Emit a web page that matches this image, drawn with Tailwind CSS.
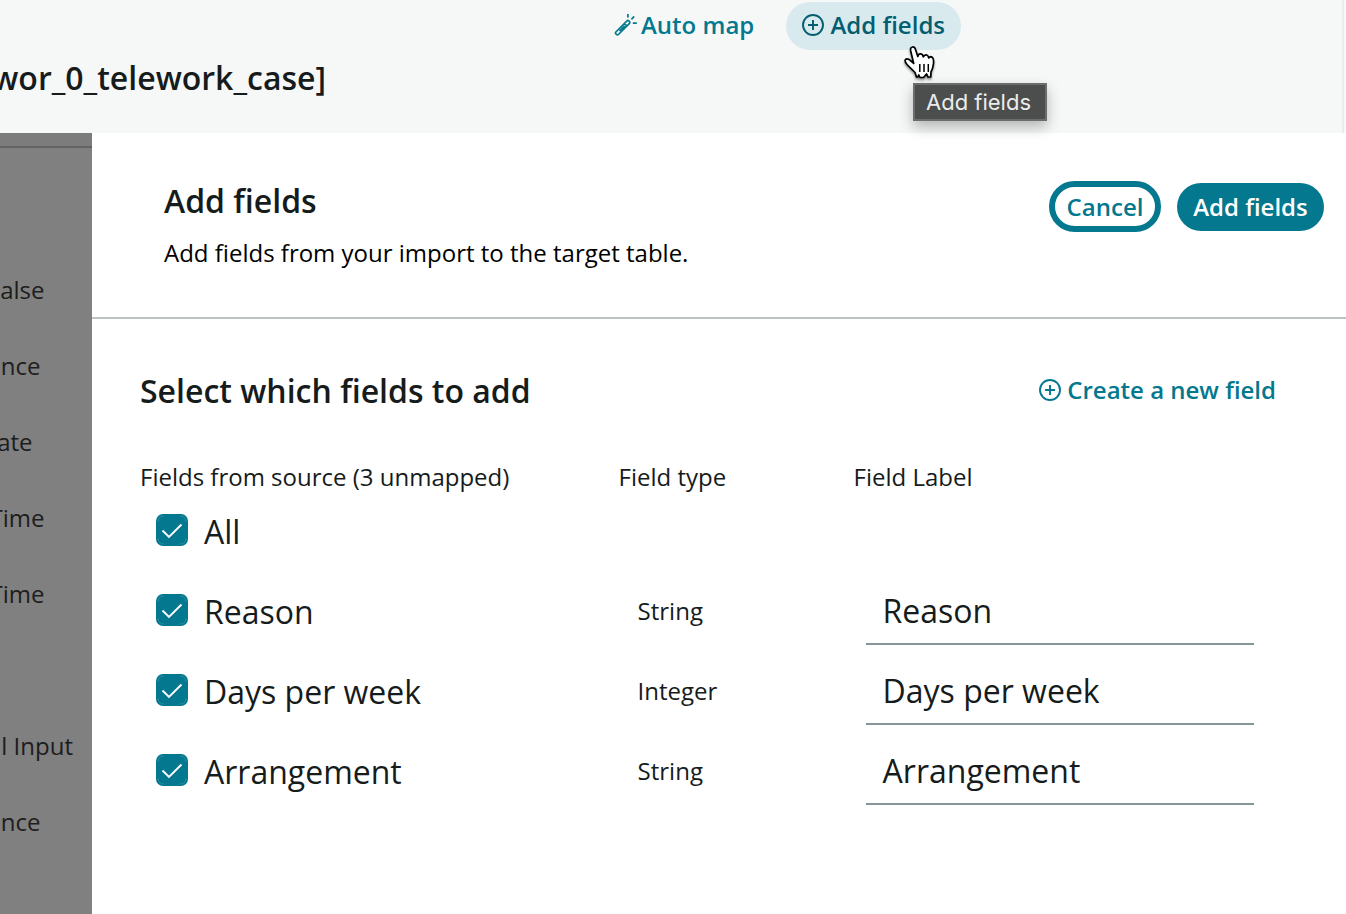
<!DOCTYPE html>
<html lang="en">
<head>
<meta charset="utf-8">
<title>Add fields</title>
<script src="https://cdn.jsdelivr.net/npm/@tailwindcss/browser@4"></script>
</head>
<body class="relative flex h-[914px] w-[1346px] flex-col overflow-hidden bg-white font-['Open_Sans',sans-serif] text-2xl text-[#161b1b]">
<svg class="hidden">
  <symbol id="plus" viewBox="0 0 22 22"><circle cx="11" cy="11" r="10" fill="none" stroke="currentColor" stroke-width="1.9"/><path d="M11 6v10M6 11h10" stroke="currentColor" stroke-width="1.9"/></symbol>
  <symbol id="check" viewBox="0 0 32 32"><path d="M2 8Q2 2 8 2M24 2Q30 2 30 8M30 24Q30 30 24 30M8 30Q2 30 2 24" fill="none" stroke="#4b9cac" stroke-width=".6"/><path d="M6.500 16.500l6.500 6.500L25.500 10.500" fill="none" stroke="#fff" stroke-width="1.9"/></symbol>
</svg>
<header class="flex h-[133px] shrink-0 flex-col bg-[#f6f8f8]">
  <div class="mr-[2px] h-full border-r-2 border-[#e9ecec]">
    <div class="ml-[614px] flex h-[50px] items-start pt-[2px] font-semibold text-[#03788e]">
      <div class="flex h-[46px] w-[140px] items-center">
        <svg class="mr-1 h-[23px] w-[23px] shrink-0" viewBox="0 0 23 23" fill="none" stroke="currentColor" stroke-width="1.700"><path d="M1.900 18L13 6.900Q13.900 6 14.800 6.900L15.500 7.600Q16.400 8.500 15.500 9.400L4.400 20.500Q3.500 21.400 2.600 20.500L1.900 19.800Q1 18.900 1.900 18ZM10.500 9.600l2.400 2.400M5.500 17l5.200-5.200M13.900 0v3.600M20.200 2.400l-2.800 2.900M22.800 9.200h-4"/></svg>
        <span class="whitespace-nowrap">Auto map</span>
      </div>
      <div class="ml-8 h-12 w-[175px] rounded-full bg-[#d9eaef] pl-4 text-[#035e6f]">
        <div class="flex h-[46px] items-center"><svg class="mr-[6.5px] h-[22px] w-[22px] shrink-0"><use href="#plus"/></svg><span class="whitespace-nowrap">Add fields</span></div>
      </div>
    </div>
    <div class="mt-[4px] flex h-12 w-[326px] items-center justify-end overflow-hidden whitespace-nowrap text-[32px] font-semibold leading-[48px]">wor_0_telework_case]</div>
  </div>
</header>
<div class="flex min-h-0 flex-1">
  <aside class="w-[92px] shrink-0 overflow-hidden bg-[#808080] text-[#1d1d1d]">
    <div class="h-[15px] border-b-2 border-[#626464] bg-[#7c7c7c]"></div>
    <div class="mt-[104px] flex flex-col leading-[76px]">
      <div class="flex h-[76px] w-[44.5px] justify-end">False</div>
      <div class="flex h-[76px] w-[40.5px] justify-end">Reference</div>
      <div class="flex h-[76px] w-[32.5px] justify-end">Date</div>
      <div class="flex h-[76px] w-[44.5px] justify-end">Date/Time</div>
      <div class="flex h-[76px] w-[44.5px] justify-end">Date/Time</div>
      <div class="h-[76px]"></div>
      <div class="flex h-[76px] w-[73px] justify-end whitespace-nowrap">l Input</div>
      <div class="flex h-[76px] w-[40.5px] justify-end">Reference</div>
    </div>
  </aside>
  <main class="flex-1">
    <section class="flex h-[186px] justify-between border-b-2 border-[#bbc3c3] pl-[72px] pr-[22px] pt-[44px]">
      <div>
        <h1 class="text-[32px] font-semibold leading-[48px]">Add fields</h1>
        <p class="mt-[10px] leading-9 text-black">Add fields from your import to the target table.</p>
      </div>
      <div class="mt-[4px] flex h-[51px] items-center gap-4 font-semibold">
        <button class="h-[51px] w-[112px] rounded-full border-[6px] border-[#03788e] text-[#03788e]">Cancel</button>
        <button class="h-12 w-[147px] rounded-full bg-[#03788e] text-white">Add fields</button>
      </div>
    </section>
    <section class="pl-[48px] pr-[70px] pt-[48px]">
      <div class="flex h-12 items-center justify-between">
        <h2 class="text-[32px] font-semibold leading-[48px]">Select which fields to add</h2>
        <div class="mb-[2px] flex items-center font-semibold text-[#03788e]"><svg class="mr-[6px] h-[22px] w-[22px]"><use href="#plus"/></svg>Create a new field</div>
      </div>
      <div class="mt-[44px] grid h-9 grid-cols-[478.6px_235px_1fr] items-center"><span>Fields from source (3 unmapped)</span><span>Field type</span><span>Field Label</span></div>
      <div class="grid grid-cols-[497.6px_228.4px_388px] leading-[80px]">
        <div class="flex h-[80px] items-center pl-4 text-[32px]"><svg class="mr-4 mb-[10px] h-8 w-8 rounded-[7px] bg-[#03788e]"><use href="#check"/></svg><span class="mb-[7px]">All</span></div><div></div><div></div>
        <div class="flex h-[80px] items-center pl-4 text-[32px]"><svg class="mr-4 mb-[10px] h-8 w-8 rounded-[7px] bg-[#03788e]"><use href="#check"/></svg><span class="mb-[7px]">Reason</span></div>
        <div class="-mt-1">String</div>
        <div class="mb-[10px] h-[70px] border-b-2 border-[#879596] pl-[16.6px] text-[32px] leading-[71px]">Reason</div>
        <div class="flex h-[80px] items-center pl-4 text-[32px]"><svg class="mr-4 mb-[10px] h-8 w-8 rounded-[7px] bg-[#03788e]"><use href="#check"/></svg><span class="mb-[7px]">Days per week</span></div>
        <div class="-mt-1">Integer</div>
        <div class="mb-[10px] h-[70px] border-b-2 border-[#879596] pl-[16.6px] text-[32px] leading-[71px]">Days per week</div>
        <div class="flex h-[80px] items-center pl-4 text-[32px]"><svg class="mr-4 mb-[10px] h-8 w-8 rounded-[7px] bg-[#03788e]"><use href="#check"/></svg><span class="mb-[7px]">Arrangement</span></div>
        <div class="-mt-1">String</div>
        <div class="mb-[10px] h-[70px] border-b-2 border-[#879596] pl-[16.6px] text-[32px] leading-[71px]">Arrangement</div>
      </div>
    </section>
  </main>
</div>
<div class="absolute left-[913px] top-[83px] flex h-[38px] w-[134px] items-center justify-center border-2 border-[#6b6d6c] bg-[#4c4e4d] pr-[3px] pt-[2px] font-['Inter',sans-serif] text-[22px] text-[#ebebeb] shadow-[0_6px_14px_rgba(0,0,0,0.28)]">Add fields</div>
<svg class="absolute left-[902px] top-[44px] h-[38px] w-[36px] drop-shadow-[0_2px_1px_rgba(0,0,0,0.4)]" viewBox="0 0 36 38"><path d="M14.500 33L13 28.500L5 20.500Q2.200 17 3.500 15.500Q5.500 13.800 9 17L11.700 19.500L8.700 7Q8 3.500 10.500 3Q12.800 2.700 13.700 6L15.800 12.500Q16.500 9.300 19 9.900Q21 10.500 21.300 13Q22.500 10.300 24.800 11Q26.500 11.700 26.700 14Q28.300 12 30.200 13.200Q32 14.500 31.500 19.500Q31 24.500 29 28L28.800 33H26L24.500 30L21.500 33.500H18L16.800 31L15.800 33Z" fill="#fff" stroke="#000" stroke-width="1.700" stroke-linejoin="round"/><path d="M17.800 20v8M22 20v8M26.300 20v8" stroke="#000" stroke-width="1.500"/></svg>
</body>
</html>
